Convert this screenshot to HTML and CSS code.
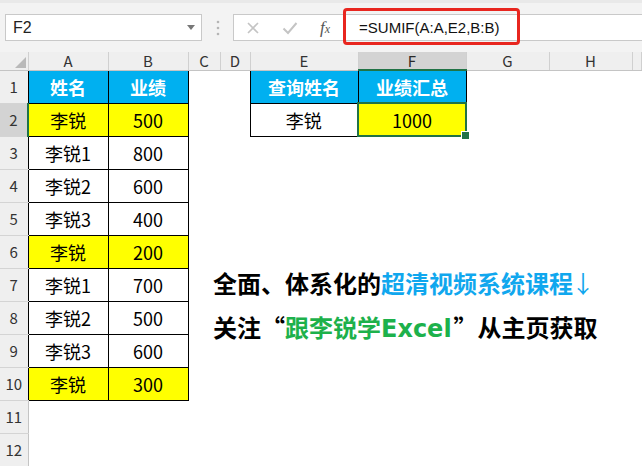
FILE: index.html
```html
<!DOCTYPE html>
<html lang="zh-CN">
<head>
  <meta charset="UTF-8" />
  <title>SUMIF 条件求和</title>
  <link rel="stylesheet" href="styles.css">
</head>
<body>

  <div class="bar">
    <div class="namebox">
      <span>F2</span>
      <span class="drop"></span>
    </div>
    <svg class="grip" width="4" height="16" viewBox="0 0 4 16">
      <circle cx="2" cy="2" r="1.3" fill="#b5b5b5"/>
      <circle cx="2" cy="8" r="1.3" fill="#b5b5b5"/>
      <circle cx="2" cy="14" r="1.3" fill="#b5b5b5"/>
    </svg>
    <div class="formula">
      <svg class="btn" width="14" height="14" viewBox="0 0 14 14">
        <path d="M2 2 L12 12 M12 2 L2 12" stroke="#c4c4c4" stroke-width="1.6" fill="none"/>
      </svg>
      <svg class="btn" width="16" height="14" viewBox="0 0 16 14">
        <path d="M1.5 7.5 L6 12 L14.5 2" stroke="#c4c4c4" stroke-width="2" fill="none"/>
      </svg>
      <span class="fx">f<small>x</small></span>
      <span class="text">=SUMIF(A:A,E2,B:B)</span>
    </div>
    <div class="mark"></div>
  </div>

  <table class="sheet">
    <colgroup>
      <col class="w-rh"><col class="w-ab"><col class="w-ab"><col class="w-c"><col class="w-d">
      <col class="w-ef"><col class="w-ef"><col class="w-gh"><col class="w-gh"><col>
    </colgroup>
    <tr class="colhead">
      <th class="corner">
        <svg width="11" height="11" viewBox="0 0 11 11"><path d="M11 0 L11 11 L0 11 Z" fill="#b9b9b9"/></svg>
      </th>
      <th>A</th><th>B</th><th>C</th><th>D</th><th>E</th><th class="sel">F</th><th>G</th><th>H</th><th></th>
    </tr>
    <tr>
      <th class="rh">1</th>
      <td class="box hd">姓名</td><td class="box hd">业绩</td><td></td><td></td>
      <td class="box hd">查询姓名</td><td class="box hd">业绩汇总</td><td></td><td></td><td></td>
    </tr>
    <tr>
      <th class="rh sel">2</th>
      <td class="box hi">李锐</td><td class="box hi">500</td><td></td><td></td>
      <td class="box">李锐</td><td class="box hi active">1000</td><td></td><td></td><td></td>
    </tr>
    <tr>
      <th class="rh">3</th>
      <td class="box">李锐1</td><td class="box">800</td><td colspan="7"></td>
    </tr>
    <tr>
      <th class="rh">4</th>
      <td class="box">李锐2</td><td class="box">600</td><td colspan="7"></td>
    </tr>
    <tr>
      <th class="rh">5</th>
      <td class="box">李锐3</td><td class="box">400</td><td colspan="7"></td>
    </tr>
    <tr>
      <th class="rh">6</th>
      <td class="box hi">李锐</td><td class="box hi">200</td><td colspan="7"></td>
    </tr>
    <tr>
      <th class="rh">7</th>
      <td class="box">李锐1</td><td class="box">700</td><td colspan="7"></td>
    </tr>
    <tr>
      <th class="rh">8</th>
      <td class="box">李锐2</td><td class="box">500</td><td colspan="7"></td>
    </tr>
    <tr>
      <th class="rh">9</th>
      <td class="box">李锐3</td><td class="box">600</td><td colspan="7"></td>
    </tr>
    <tr>
      <th class="rh">10</th>
      <td class="box hi">李锐</td><td class="box hi">300</td><td colspan="7"></td>
    </tr>
    <tr>
      <th class="rh edge">11</th><td colspan="9"></td>
    </tr>
    <tr>
      <th class="rh edge">12</th><td colspan="9"></td>
    </tr>
  </table>

  <div class="promo">
    <p>全面、体系化的<span class="blue">超清视频系统课程<span class="arrow">↓</span></span></p>
    <p>关注“<span class="green">跟李锐学<span class="latin">Excel</span></span>”从主页获取</p>
  </div>

</body>
</html>
```

FILE: styles.css
```css
:root {
  --barra: #f3f3f3;
  --cab: #efefef;
  --linha: #d4d4d4;
  --verde: #217346;
  --azul: #00b0f0;
  --amarelo: #ffff00;
}

* {
  box-sizing: border-box;
}

body {
  margin: 0;
  width: 642px;
  height: 466px;
  overflow: hidden;
  position: relative;
  background: #ffffff;
  font-family: "Noto Sans CJK SC", "Noto Sans", sans-serif;
  color: #000;
}

/* barra de fórmulas */
.bar {
  height: 52px;
  background: var(--barra);
  border-top: 3px solid #e9e9e9;
  padding-top: 11px;
  display: flex;
  align-items: flex-start;
}

.namebox {
  width: 197px;
  height: 27px;
  margin-left: 5px;
  background: #fff;
  border: 1px solid #c9c9c9;
  display: flex;
  align-items: center;
  justify-content: space-between;
  padding: 0 6px 0 7px;
  font-family: "Liberation Sans", sans-serif;
  font-size: 16px;
  color: #222;
}

.drop {
  width: 0;
  height: 0;
  border-left: 4px solid transparent;
  border-right: 4px solid transparent;
  border-top: 5px solid #777;
}

.grip {
  margin: 6px 0 0 14px;
}

.formula {
  flex: 1;
  height: 27px;
  margin-left: 13px;
  margin-right: -2px;
  background: #fff;
  border: 1px solid #c9c9c9;
  display: flex;
  align-items: center;
}

.btn {
  margin-left: 12px;
}

.btn + .btn {
  margin-left: 22px;
}

.fx {
  margin-left: 22px;
  font-family: "Liberation Serif", serif;
  font-style: italic;
  font-size: 17px;
  color: #555;
}

.fx small {
  font-size: 12px;
}

.text {
  margin-left: 29px;
  font-family: "Liberation Sans", sans-serif;
  font-size: 15px;
  color: #111;
}

.mark {
  position: absolute;
  left: 343px;
  top: 8px;
  width: 177px;
  height: 37px;
  border: 3px solid #e8261f;
  border-radius: 4px;
}

/* planilha */
.sheet {
  border-collapse: collapse;
  table-layout: fixed;
  width: 642px;
}

.w-rh { width: 28px; }
.w-ab { width: 80px; }
.w-c { width: 32px; }
.w-d { width: 30px; }
.w-ef { width: 108px; }
.w-gh { width: 83px; }

.sheet tr {
  height: 33px;
}

.sheet td {
  padding: 0;
  text-align: center;
  font-size: 18px;
  line-height: 1;
}

.colhead {
  height: 18px !important;
}

.colhead th {
  height: 18px;
  padding: 0;
  background: var(--cab);
  border-right: 1px solid #d0d0d0;
  border-bottom: 1px solid #c4c4c4;
  font-weight: normal;
  font-size: 15px;
  line-height: 1;
  color: #333;
}

.colhead th.sel {
  background: #d3d3d3;
  border-bottom: 2px solid var(--verde);
  color: #2a2a2a;
}

.corner {
  text-align: right;
  vertical-align: bottom;
}

.corner svg {
  display: block;
  margin: 0 2px 2px auto;
}

.rh {
  padding: 0;
  background: var(--cab);
  border-bottom: 1px solid var(--linha);
  font-weight: normal;
  font-size: 15px;
  color: #333;
}

.rh.edge {
  border-right: 1px solid #c4c4c4;
}

.rh.sel {
  background: #d3d3d3;
  border-right: 2px solid var(--verde);
}

.box {
  border: 1px solid #000;
}

.hd {
  background: var(--azul);
  color: #fff;
  font-weight: bold;
}

.hi {
  background: var(--amarelo);
}

.active {
  border: 2px solid var(--verde);
  position: relative;
}

.active::after {
  content: "";
  position: absolute;
  right: -5px;
  bottom: -5px;
  width: 7px;
  height: 7px;
  background: var(--verde);
  border: 1px solid #fff;
}

/* texto de divulgação */
.promo {
  position: absolute;
  left: 213px;
  top: 261px;
  font-size: 24px;
  font-weight: bold;
  line-height: 44px;
}

.promo p {
  margin: 0;
}

.blue {
  color: #10a7ee;
}

.arrow {
  margin-left: -2px;
  font-weight: normal;
}

.green {
  color: #1db14b;
}

.latin {
  font-family: "DejaVu Sans", sans-serif;
  margin-right: 2px;
}
```
